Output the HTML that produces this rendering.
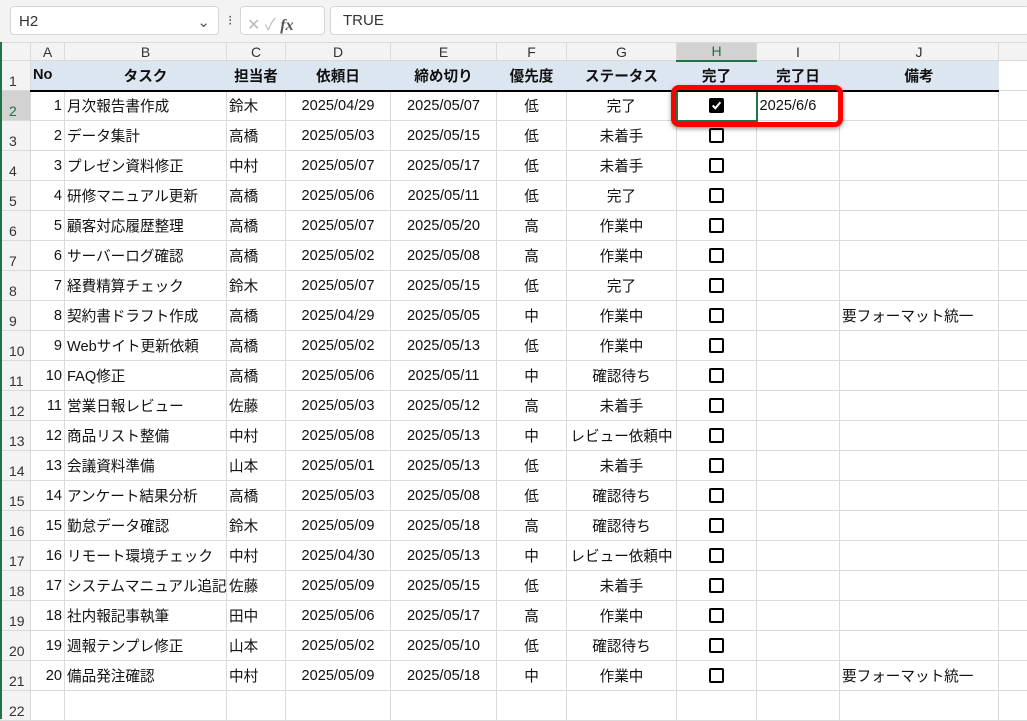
<!DOCTYPE html>
<html><head><meta charset="utf-8">
<style>
*{box-sizing:border-box;margin:0;padding:0}
body{width:1027px;height:719px;overflow:hidden;background:#fff;font-family:"Liberation Sans","Noto Sans CJK JP",sans-serif;position:relative}
.top{position:absolute;left:0;top:0;width:1027px;height:42px;background:#f3f3f3}
.nb{position:absolute;left:10px;top:6px;width:209px;height:29px;background:#fff;border:1px solid #d6d6d6;border-radius:4px;font-size:15px;color:#333;padding:6px 8px}
.fxb{position:absolute;left:240px;top:6px;width:85px;height:29px;background:#fff;border:1px solid #d6d6d6;border-radius:4px;color:#bbb;font-size:16px;padding:4px 6px}
.fb{position:absolute;left:330px;top:6px;width:700px;height:29px;background:#fff;border:1px solid #d6d6d6;border-radius:4px;font-size:15px;color:#333;padding:5px 12px}
table{position:absolute;left:0;top:42px;border-collapse:collapse;table-layout:fixed;width:1038px;font-size:14.6px}
td{border:1px solid #dadada;height:30px;white-space:nowrap;overflow:hidden;padding:0 2px;vertical-align:middle;color:#111}
tr.ch td{height:18px;background:#f3f3f3;text-align:center;font-size:14px;color:#333;border-color:#dadada}
td.rh{background:#f3f3f3;font-size:14px;color:#333;text-align:left;vertical-align:bottom;padding:0 0 1px 8px}
tr.h td.c{background:#dce6f1;font-weight:bold;text-align:center;border-bottom:2px solid #000;border-left-color:#dce6f1;border-right-color:#dce6f1}
.r{text-align:right}.m{text-align:center}
.cb{display:inline-block;width:15px;height:15px;border:2px solid #000;border-radius:2px;vertical-align:middle}
.cbk{background:#000;position:relative}
</style></head><body>
<div class="top">
<div class="nb">H2<span style="float:right;color:#555">⌄</span></div>
<div style="position:absolute;left:228px;top:12px;font-size:14px;color:#555">⁝</div>
<div class="fxb">✕ ✓ <i style="font-family:'Liberation Serif',serif;color:#555;font-weight:bold">fx</i></div>
<div class="fb">TRUE</div>
</div>
<div style="position:absolute;left:0;top:42px;width:2px;height:677px;background:#217346;z-index:3"></div>
<table>
<colgroup><col style="width:30px"><col style="width:34px"><col style="width:162px"><col style="width:59px"><col style="width:105px"><col style="width:106px"><col style="width:70px"><col style="width:110px"><col style="width:80px"><col style="width:83px"><col style="width:159px"><col style="width:40px"></colgroup>
<tr class="ch"><td></td><td>A</td><td>B</td><td>C</td><td>D</td><td>E</td><td>F</td><td>G</td><td style="background:#d2d2d2;color:#217346;border-bottom:2px solid #217346">H</td><td>I</td><td>J</td><td></td></tr>
<tr class="h"><td class="rh">1</td><td class="c" style="text-align:left">No</td><td class="c">タスク</td><td class="c">担当者</td><td class="c">依頼日</td><td class="c">締め切り</td><td class="c">優先度</td><td class="c">ステータス</td><td class="c">完了</td><td class="c">完了日</td><td class="c">備考</td><td></td></tr>
<tr><td class="rh" style="background:#d2d2d2;color:#217346">2</td><td class="r">1</td><td>月次報告書作成</td><td>鈴木</td><td class="m">2025/04/29</td><td class="m">2025/05/07</td><td class="m">低</td><td class="m">完了</td><td class="m" style="border:2px solid #217346"><span class="cb cbk"><svg width="11" height="11" viewBox="0 0 10 10" style="position:absolute;left:0;top:0"><path d="M1.5 5 L4 7.5 L8.5 2" stroke="#fff" stroke-width="1.8" fill="none"/></svg></span></td><td>2025/6/6</td><td></td><td></td></tr>
<tr><td class="rh">3</td><td class="r">2</td><td>データ集計</td><td>高橋</td><td class="m">2025/05/03</td><td class="m">2025/05/15</td><td class="m">低</td><td class="m">未着手</td><td class="m"><span class="cb"></span></td><td></td><td></td><td></td></tr>
<tr><td class="rh">4</td><td class="r">3</td><td>プレゼン資料修正</td><td>中村</td><td class="m">2025/05/07</td><td class="m">2025/05/17</td><td class="m">低</td><td class="m">未着手</td><td class="m"><span class="cb"></span></td><td></td><td></td><td></td></tr>
<tr><td class="rh">5</td><td class="r">4</td><td>研修マニュアル更新</td><td>高橋</td><td class="m">2025/05/06</td><td class="m">2025/05/11</td><td class="m">低</td><td class="m">完了</td><td class="m"><span class="cb"></span></td><td></td><td></td><td></td></tr>
<tr><td class="rh">6</td><td class="r">5</td><td>顧客対応履歴整理</td><td>高橋</td><td class="m">2025/05/07</td><td class="m">2025/05/20</td><td class="m">高</td><td class="m">作業中</td><td class="m"><span class="cb"></span></td><td></td><td></td><td></td></tr>
<tr><td class="rh">7</td><td class="r">6</td><td>サーバーログ確認</td><td>高橋</td><td class="m">2025/05/02</td><td class="m">2025/05/08</td><td class="m">高</td><td class="m">作業中</td><td class="m"><span class="cb"></span></td><td></td><td></td><td></td></tr>
<tr><td class="rh">8</td><td class="r">7</td><td>経費精算チェック</td><td>鈴木</td><td class="m">2025/05/07</td><td class="m">2025/05/15</td><td class="m">低</td><td class="m">完了</td><td class="m"><span class="cb"></span></td><td></td><td></td><td></td></tr>
<tr><td class="rh">9</td><td class="r">8</td><td>契約書ドラフト作成</td><td>高橋</td><td class="m">2025/04/29</td><td class="m">2025/05/05</td><td class="m">中</td><td class="m">作業中</td><td class="m"><span class="cb"></span></td><td></td><td>要フォーマット統一</td><td></td></tr>
<tr><td class="rh">10</td><td class="r">9</td><td>Webサイト更新依頼</td><td>高橋</td><td class="m">2025/05/02</td><td class="m">2025/05/13</td><td class="m">低</td><td class="m">作業中</td><td class="m"><span class="cb"></span></td><td></td><td></td><td></td></tr>
<tr><td class="rh">11</td><td class="r">10</td><td>FAQ修正</td><td>高橋</td><td class="m">2025/05/06</td><td class="m">2025/05/11</td><td class="m">中</td><td class="m">確認待ち</td><td class="m"><span class="cb"></span></td><td></td><td></td><td></td></tr>
<tr><td class="rh">12</td><td class="r">11</td><td>営業日報レビュー</td><td>佐藤</td><td class="m">2025/05/03</td><td class="m">2025/05/12</td><td class="m">高</td><td class="m">未着手</td><td class="m"><span class="cb"></span></td><td></td><td></td><td></td></tr>
<tr><td class="rh">13</td><td class="r">12</td><td>商品リスト整備</td><td>中村</td><td class="m">2025/05/08</td><td class="m">2025/05/13</td><td class="m">中</td><td class="m">レビュー依頼中</td><td class="m"><span class="cb"></span></td><td></td><td></td><td></td></tr>
<tr><td class="rh">14</td><td class="r">13</td><td>会議資料準備</td><td>山本</td><td class="m">2025/05/01</td><td class="m">2025/05/13</td><td class="m">低</td><td class="m">未着手</td><td class="m"><span class="cb"></span></td><td></td><td></td><td></td></tr>
<tr><td class="rh">15</td><td class="r">14</td><td>アンケート結果分析</td><td>高橋</td><td class="m">2025/05/03</td><td class="m">2025/05/08</td><td class="m">低</td><td class="m">確認待ち</td><td class="m"><span class="cb"></span></td><td></td><td></td><td></td></tr>
<tr><td class="rh">16</td><td class="r">15</td><td>勤怠データ確認</td><td>鈴木</td><td class="m">2025/05/09</td><td class="m">2025/05/18</td><td class="m">高</td><td class="m">確認待ち</td><td class="m"><span class="cb"></span></td><td></td><td></td><td></td></tr>
<tr><td class="rh">17</td><td class="r">16</td><td>リモート環境チェック</td><td>中村</td><td class="m">2025/04/30</td><td class="m">2025/05/13</td><td class="m">中</td><td class="m">レビュー依頼中</td><td class="m"><span class="cb"></span></td><td></td><td></td><td></td></tr>
<tr><td class="rh">18</td><td class="r">17</td><td>システムマニュアル追記</td><td>佐藤</td><td class="m">2025/05/09</td><td class="m">2025/05/15</td><td class="m">低</td><td class="m">未着手</td><td class="m"><span class="cb"></span></td><td></td><td></td><td></td></tr>
<tr><td class="rh">19</td><td class="r">18</td><td>社内報記事執筆</td><td>田中</td><td class="m">2025/05/06</td><td class="m">2025/05/17</td><td class="m">高</td><td class="m">作業中</td><td class="m"><span class="cb"></span></td><td></td><td></td><td></td></tr>
<tr><td class="rh">20</td><td class="r">19</td><td>週報テンプレ修正</td><td>山本</td><td class="m">2025/05/02</td><td class="m">2025/05/10</td><td class="m">低</td><td class="m">確認待ち</td><td class="m"><span class="cb"></span></td><td></td><td></td><td></td></tr>
<tr><td class="rh">21</td><td class="r">20</td><td>備品発注確認</td><td>中村</td><td class="m">2025/05/09</td><td class="m">2025/05/18</td><td class="m">中</td><td class="m">作業中</td><td class="m"><span class="cb"></span></td><td></td><td>要フォーマット統一</td><td></td></tr>
<tr><td class="rh">22</td><td></td><td></td><td></td><td></td><td></td><td></td><td></td><td></td><td></td><td></td><td></td></tr>
</table>
<div style="position:absolute;left:671px;top:85px;width:172px;height:42px;border:5px solid #f00;border-radius:8px;box-shadow:0 2px 4px rgba(0,0,0,.4);z-index:4"></div>
</body></html>
